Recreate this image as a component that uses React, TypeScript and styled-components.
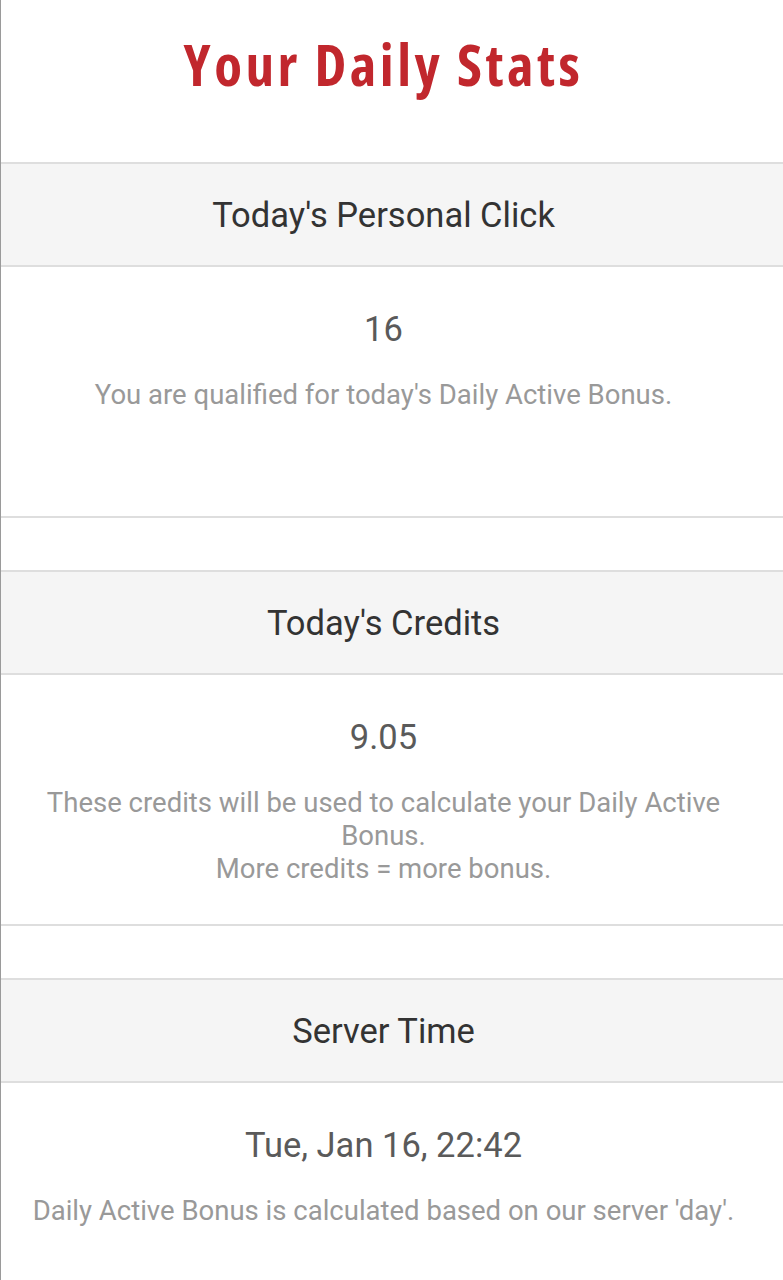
import styled, { createGlobalStyle } from 'styled-components'

const GlobalStyle = createGlobalStyle`
  html, body {
    margin: 0;
    padding: 0;
    background: #fff;
  }
  body {
    font-family: Roboto, 'Noto Sans', sans-serif;
    border-left: 1px solid #9a9a9a;
    min-height: 1280px;
    box-sizing: border-box;
  }
`

interface Stat {
  title: string
  value: string
  notes: string[]
}

const stats: Stat[] = [
  {
    title: "Today's Personal Click",
    value: '16',
    notes: ["You are qualified for today's Daily Active Bonus."],
  },
  {
    title: "Today's Credits",
    value: '9.05',
    notes: ['These credits will be used to calculate your Daily Active Bonus.', 'More credits = more bonus.'],
  },
  {
    title: 'Server Time',
    value: 'Tue, Jan 16, 22:42',
    notes: ["Daily Active Bonus is calculated based on our server 'day'."],
  },
]

export default function App() {
  return (
    <>
      <GlobalStyle />
      <Page>
        <Title>Your Daily Stats</Title>
        <PanelList>
          {stats.map((s) => (
            <Panel key={s.title}>
              <PanelHeading>{s.title}</PanelHeading>
              <PanelBody>
                <Value>{s.value}</Value>
                <Note>
                  {s.notes.map((n) => (
                    <span key={n}>{n}</span>
                  ))}
                </Note>
              </PanelBody>
            </Panel>
          ))}
        </PanelList>
      </Page>
    </>
  )
}

const Page = styled.main`
  display: flex;
  flex-direction: column;
`

const Title = styled.h1`
  margin: 0;
  height: 162px;
  display: flex;
  align-items: center;
  justify-content: center;
  padding: 0 17px 34px 0;
  box-sizing: border-box;
  font-family: 'Open Sans', Lato, sans-serif;
  font-stretch: 75%;
  font-weight: 700;
  font-size: 57px;
  letter-spacing: 3.5px;
  color: #c1272d;
`

const PanelList = styled.div`
  display: flex;
  flex-direction: column;
  gap: 52px;
`

const Panel = styled.section`
  border-top: 2px solid #dedede;
  border-bottom: 2px solid #dedede;
`

const PanelHeading = styled.h2`
  margin: 0;
  height: 101px;
  display: flex;
  align-items: center;
  justify-content: center;
  padding-right: 17px;
  background: #f5f5f5;
  border-bottom: 2px solid #dedede;
  font-size: 34.5px;
  font-weight: 400;
  color: #333;
`

const PanelBody = styled.div`
  height: 249px;
  box-sizing: border-box;
  padding: 42px 37px 0 20px;
  display: flex;
  flex-direction: column;
  align-items: center;
  gap: 29px;
  text-align: center;
`

const Value = styled.div`
  font-size: 34.5px;
  line-height: 40px;
  color: #5a5a5a;
`

const Note = styled.p`
  margin: 0;
  display: flex;
  flex-direction: column;
  align-items: center;
  font-size: 27.5px;
  line-height: 33px;
  color: #999;
`
